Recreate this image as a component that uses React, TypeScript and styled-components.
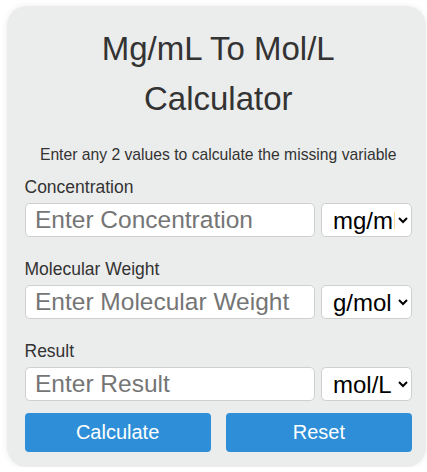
import styled, { createGlobalStyle } from "styled-components";

const GlobalStyle = createGlobalStyle`
  body {
    margin: 0;
    background: #ffffff;
    font-family: "Liberation Sans", Arial, sans-serif;
  }
`;

const Card = styled.div`
  box-sizing: border-box;
  width: 419px;
  margin: 6px 0 0 7px;
  padding: 18px 14px 15px 17.5px;
  background: #ebecec;
  border-radius: 20px;
  box-shadow: 0 0 6px rgba(0, 0, 0, 0.08);
  color: #333;
`;

const Title = styled.h1`
  margin: 0;
  font-size: 33px;
  font-weight: normal;
  line-height: 50px;
  text-align: center;
  color: #333;
`;

const Subtitle = styled.p`
  margin: 20.5px 0 13.5px;
  font-size: 15.7px;
  line-height: 19px;
  text-align: center;
  color: #333;
`;

const Field = styled.div<{ $last?: boolean }>`
  margin-bottom: ${(p) => (p.$last ? "11.5px" : "22px")};
`;

const Label = styled.label`
  display: block;
  font-size: 17.5px;
  line-height: 21px;
  margin-bottom: 5px;
  color: #333;
`;

const Row = styled.div`
  display: flex;
  gap: 6px;
`;

const Input = styled.input`
  box-sizing: border-box;
  flex: 1;
  min-width: 0;
  height: 34px;
  padding: 0 9.5px;
  border: 1px solid #cfcfcf;
  border-radius: 5px;
  background: #fff;
  font-family: "Liberation Sans", Arial, sans-serif;
  font-size: 24.5px;
  color: #333;
  outline: none;

  &::placeholder {
    color: #757575;
  }
`;

const Select = styled.select`
  box-sizing: border-box;
  width: 91px;
  height: 34px;
  padding: 0 0 0 7px;
  border: 1px solid #cfcfcf;
  border-radius: 5px;
  background: #fff;
  font-family: "Liberation Sans", Arial, sans-serif;
  font-size: 24px;
  color: #000;
`;

const Buttons = styled.div`
  display: flex;
  gap: 15px;
`;

const Button = styled.button`
  flex: 1;
  height: 39.5px;
  border: none;
  border-radius: 4px;
  background: #2e8fd8;
  color: #fff;
  font-family: "Liberation Sans", Arial, sans-serif;
  font-size: 20px;
  cursor: pointer;
`;

const fields = [
  { label: "Concentration", placeholder: "Enter Concentration", units: ["mg/mL", "g/L", "µg/mL"] },
  { label: "Molecular Weight", placeholder: "Enter Molecular Weight", units: ["g/mol", "kg/mol"] },
  { label: "Result", placeholder: "Enter Result", units: ["mol/L", "mmol/L"] },
];

export default function App() {
  return (
    <>
      <GlobalStyle />
      <Card>
        <Title>
          Mg/mL To Mol/L
          <br />
          Calculator
        </Title>
        <Subtitle>Enter any 2 values to calculate the missing variable</Subtitle>
        {fields.map((f, i) => (
          <Field key={f.label} $last={i === fields.length - 1}>
            <Label>{f.label}</Label>
            <Row>
              <Input type="number" placeholder={f.placeholder} />
              <Select defaultValue={f.units[0]}>
                {f.units.map((u) => (
                  <option key={u} value={u}>
                    {u}
                  </option>
                ))}
              </Select>
            </Row>
          </Field>
        ))}
        <Buttons>
          <Button>Calculate</Button>
          <Button>Reset</Button>
        </Buttons>
      </Card>
    </>
  );
}
